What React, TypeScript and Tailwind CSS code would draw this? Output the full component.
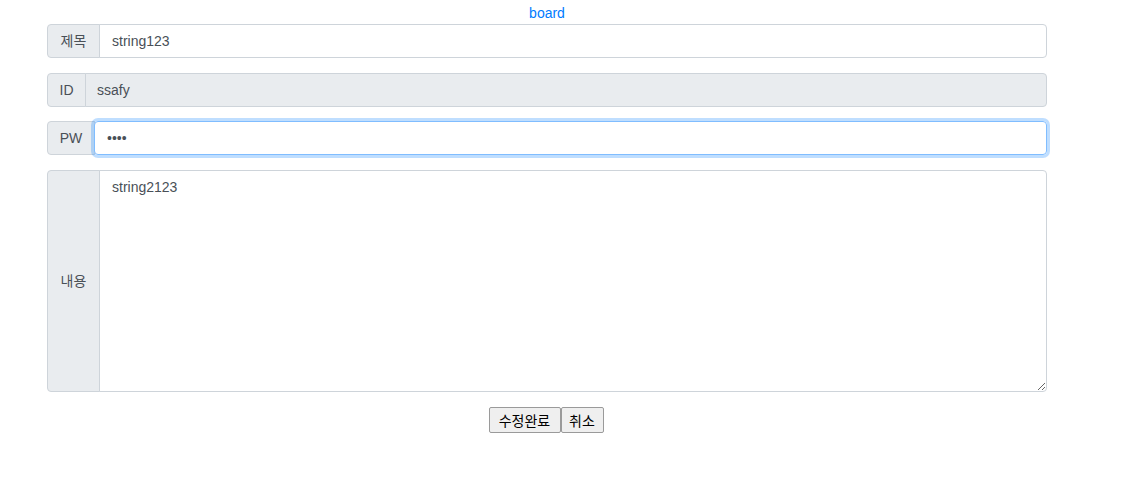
import React from 'react';

const font = { fontFamily: '"Liberation Sans", Arial, "Noto Sans CJK KR", sans-serif' };
const btnFont = { fontFamily: '"Noto Sans CJK KR", sans-serif' };

const Label = ({ text, w }: { text: string; w: string }) => (
  <div
    className={`${w} flex items-center justify-center bg-[#e9ecef] border border-[#ced4da] rounded-l-[4px] text-[14px] text-[#495057] shrink-0`}
  >
    {text}
  </div>
);

const App = () => {
  return (
    <div className="w-[1123px] h-[479px] bg-white" style={font}>
      <div className="w-[1000px] ml-[47px] flex flex-col">
        <div className="h-[24px] flex items-center justify-center pt-[2px]">
          <a className="text-[14px] text-[#007bff]">board</a>
        </div>

        <div className="flex h-[34px]">
          <Label text="제목" w="w-[53px]" />
          <input
            className="flex-1 -ml-px px-[12px] border border-[#ced4da] rounded-r-[4px] text-[14px] text-[#495057] outline-none"
            defaultValue="string123"
            style={font}
          />
        </div>

        <div className="flex h-[34px] mt-[15px]">
          <Label text="ID" w="w-[39px]" />
          <input
            className="flex-1 -ml-px pl-[11px] pr-[12px] border border-[#ced4da] rounded-r-[4px] bg-[#e9ecef] text-[14px] text-[#495057] outline-none"
            defaultValue="ssafy"
            readOnly
            style={font}
          />
        </div>

        <div className="flex h-[34px] mt-[14px]">
          <Label text="PW" w="w-[48px]" />
          <input
            type="password"
            autoFocus
            className="flex-1 -ml-px px-[12px] border border-[#80bdff] rounded-[4px] text-[14px] text-[#495057] outline-none shadow-[0_0_0_3px_rgba(0,123,255,0.25)]"
            defaultValue="1234"
            style={font}
          />
        </div>

        <div className="flex h-[222px] mt-[15px]">
          <Label text="내용" w="w-[53px]" />
          <textarea
            className="flex-1 -ml-px px-[12px] py-[6px] border border-[#ced4da] rounded-r-[4px] text-[14px] text-[#495057] outline-none"
            defaultValue="string2123"
            style={font}
          />
        </div>

        <div className="flex justify-center mt-[15px] pr-[2px]">
          <button
            className="w-[72px] h-[26px] flex items-center justify-center bg-[#efefef] border border-[#9a9a9a] rounded-[2px] text-[14px] text-black"
            style={btnFont}
          >
            수정완료
          </button>
          <button
            className="w-[43px] h-[26px] flex items-center justify-center bg-[#efefef] border border-[#9a9a9a] rounded-[2px] text-[14px] text-black"
            style={btnFont}
          >
            취소
          </button>
        </div>
      </div>
    </div>
  );
};

export default App;
